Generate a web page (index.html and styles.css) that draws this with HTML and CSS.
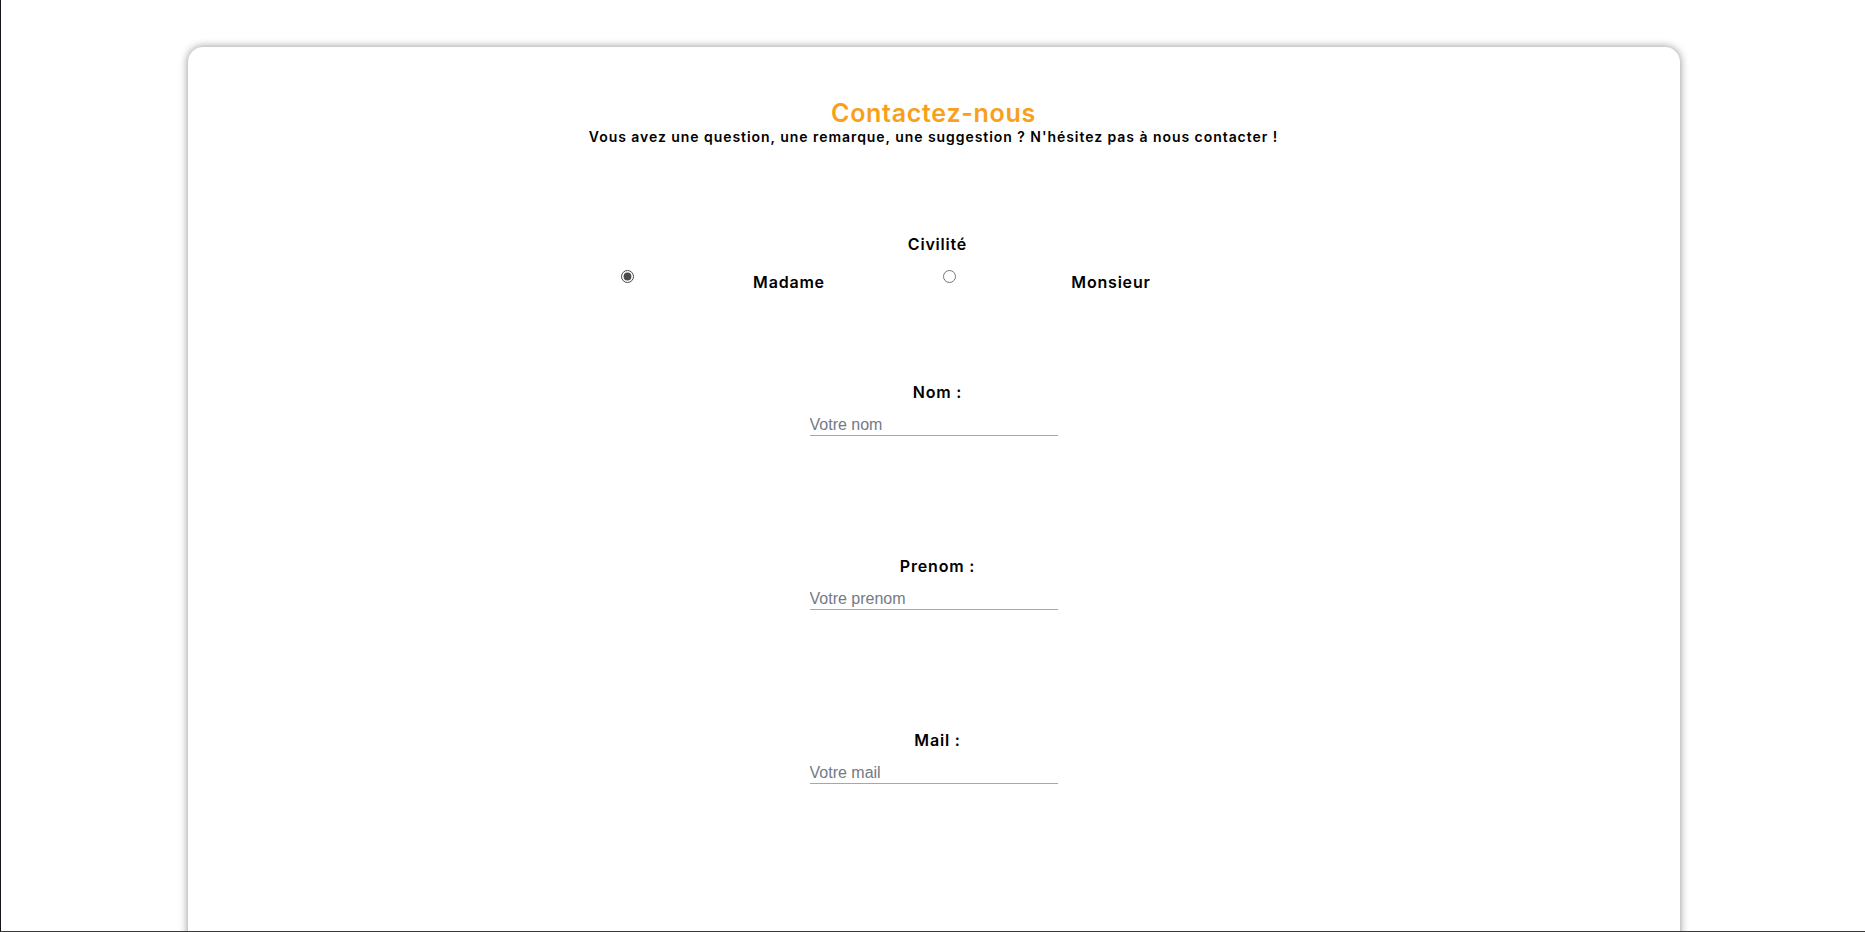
FILE: index.html
```html
<!DOCTYPE html>
<html lang="fr">
<head>
<meta charset="utf-8">
<title>Contactez-nous</title>
<link rel="stylesheet" href="styles.css">
</head>
<body>
<div class="frame"></div>
<main class="card">
  <header class="head">
    <h2 class="title">Contactez-nous</h2>
    <p class="subtitle">Vous avez une question, une remarque, une suggestion ? N'hésitez pas à nous contacter !</p>
  </header>
  <form class="form">
    <div class="civ">
      <span class="label">Civilité</span>
      <div class="radios">
        <input class="radio" type="radio" name="civ" id="mme" checked>
        <label class="radio-label" for="mme">Madame</label>
        <input class="radio" type="radio" name="civ" id="m">
        <label class="radio-label" for="m">Monsieur</label>
      </div>
    </div>
    <div class="field">
      <label class="label" for="nom">Nom :</label>
      <input class="input" type="text" id="nom" placeholder="Votre nom">
    </div>
    <div class="field">
      <label class="label" for="prenom">Prenom :</label>
      <input class="input" type="text" id="prenom" placeholder="Votre prenom">
    </div>
    <div class="field">
      <label class="label" for="mail">Mail :</label>
      <input class="input" type="text" id="mail" placeholder="Votre mail">
    </div>
    <div class="field field-msg">
      <label class="label" for="msg">Message :</label>
      <textarea class="textarea" id="msg" placeholder="Votre message"></textarea>
    </div>
  </form>
</main>
</body>
</html>
```
FILE: styles.css
```css
html, body {
  margin: 0;
  padding: 0;
  background: #fff;
}
body {
  font-family: Inter, "Noto Sans", sans-serif;
  color: #000;
}
.frame {
  position: fixed;
  inset: 0;
  border-left: 1px solid #15121c;
  border-bottom: 1px solid #3a3a3a;
  pointer-events: none;
  z-index: 10;
}
.card {
  width: 1492px;
  margin: 47px auto 40px;
  transform: translateX(1px);
  background: #fff;
  border-radius: 15px;
  box-shadow: 0 0 9px rgba(0, 0, 0, 0.45);
  padding: 50px 0 200px;
  box-sizing: border-box;
}
.head {
  text-align: center;
}
.title {
  margin: 0;
  font-size: 25px;
  line-height: 30px;
  font-weight: 600;
  letter-spacing: 0.7px;
  color: #f9a01b;
  transform: translateY(1px);
}
.subtitle {
  margin: 1px 0 0;
  font-size: 14px;
  line-height: 18px;
  font-weight: 600;
  letter-spacing: 0.95px;
}
.form {
  display: flex;
  flex-direction: column;
  align-items: center;
  margin-top: 88px;
}
.civ {
  display: flex;
  flex-direction: column;
  align-items: center;
}
.label {
  padding-left: 8px;
  font-size: 16px;
  line-height: 20px;
  font-weight: 600;
  letter-spacing: 0.8px;
}
.radios {
  display: flex;
  align-items: flex-start;
  margin-top: 15px;
  margin-left: 8px;
}
.radio {
  width: 13px;
  height: 13px;
  margin: 1px 3px 0 5px;
  accent-color: #4a4a4a;
}
.radio-label {
  box-sizing: border-box;
  width: 301px;
  padding: 3px 0 0 4px;
  text-align: center;
  font-size: 16px;
  line-height: 20px;
  font-weight: 600;
  letter-spacing: 0.8px;
}
.field {
  display: flex;
  flex-direction: column;
  align-items: center;
  margin-top: 90px;
}
.field + .field {
  margin-top: 120px;
}
.field + .field-msg {
  margin-top: 148px;
}
.input, .textarea {
  margin-top: 13px;
  width: 248px;
  box-sizing: border-box;
  padding: 1px 0;
  border: 0;
  border-bottom: 1px solid #f2a007;
  font-family: "Liberation Sans", Arial, sans-serif;
  font-size: 16px;
  line-height: 18px;
  height: 21px;
  outline: none;
  background: transparent;
}
.input::placeholder, .textarea::placeholder {
  color: #737a86;
}
.textarea {
  height: 80px;
  resize: none;
}
```
